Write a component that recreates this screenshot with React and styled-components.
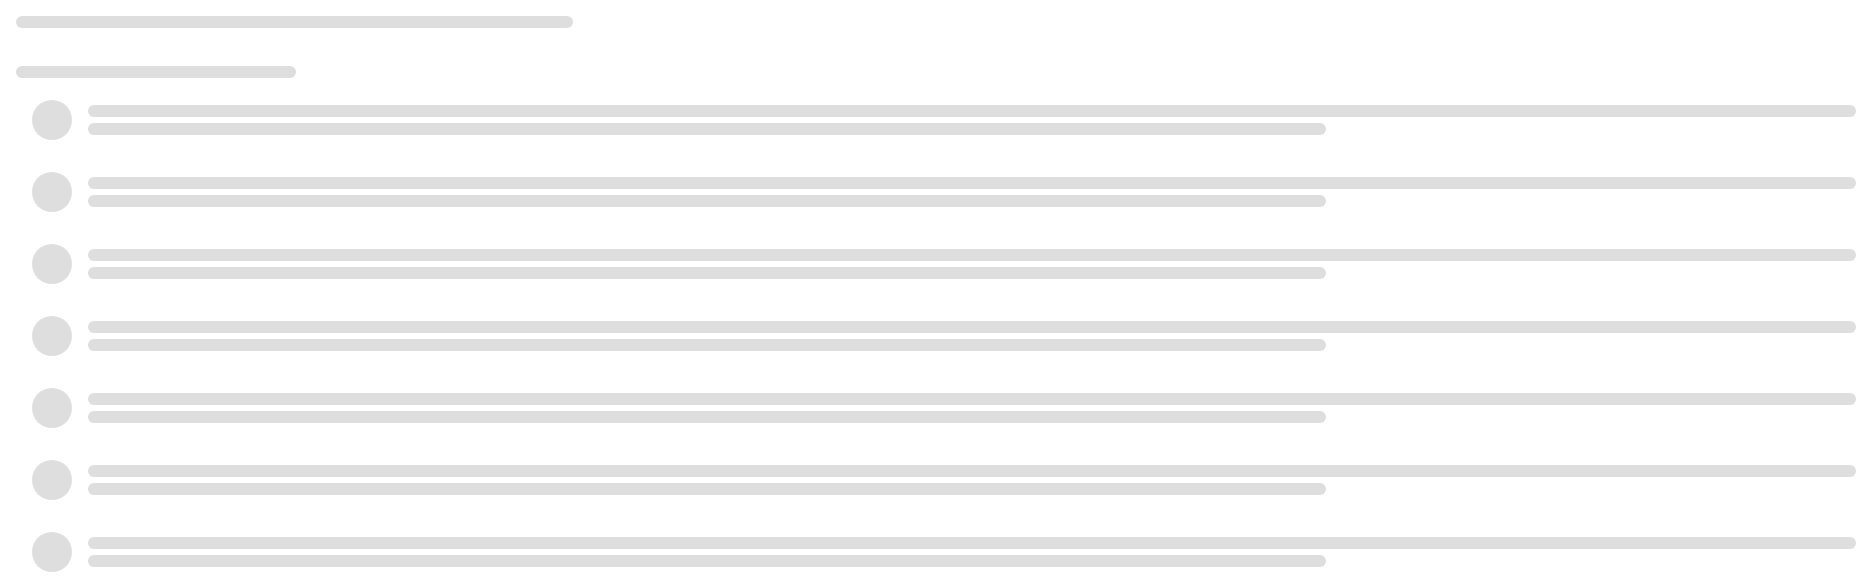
import React from "react";
import styled, { createGlobalStyle } from "styled-components";

const GlobalStyle = createGlobalStyle`
  html, body {
    margin: 0;
    padding: 0;
    background: #fff;
    font-family: "Liberation Sans", Arial, sans-serif;
  }
`;

const Page = styled.div`
  padding: 16px;
  display: flex;
  flex-direction: column;
`;

const Bar = styled.div`
  height: 12px;
  border-radius: 6px;
  background: #dedede;
  width: ${(p) => p.$width};
`;

const Header = styled.div`
  display: flex;
  flex-direction: column;
  gap: 38px;
  margin-bottom: 22px;
`;

const List = styled.div`
  display: flex;
  flex-direction: column;
  gap: 32px;
  padding-left: 16px;
`;

const Row = styled.div`
  display: flex;
  align-items: center;
  gap: 16px;
`;

const Avatar = styled.div`
  width: 40px;
  height: 40px;
  border-radius: 50%;
  background: #dedede;
  flex-shrink: 0;
`;

const Lines = styled.div`
  flex: 1;
  display: flex;
  flex-direction: column;
  gap: 6px;
`;

function App() {
  const rows = [0, 1, 2, 3, 4, 5, 6];
  return (
    <>
      <GlobalStyle />
      <Page>
        <Header>
          <Bar $width="557px" />
          <Bar $width="280px" />
        </Header>
        <List>
          {rows.map((i) => (
            <Row key={i}>
              <Avatar />
              <Lines>
                <Bar $width="100%" />
                <Bar $width="70%" />
              </Lines>
            </Row>
          ))}
        </List>
      </Page>
    </>
  );
}

export default App;
